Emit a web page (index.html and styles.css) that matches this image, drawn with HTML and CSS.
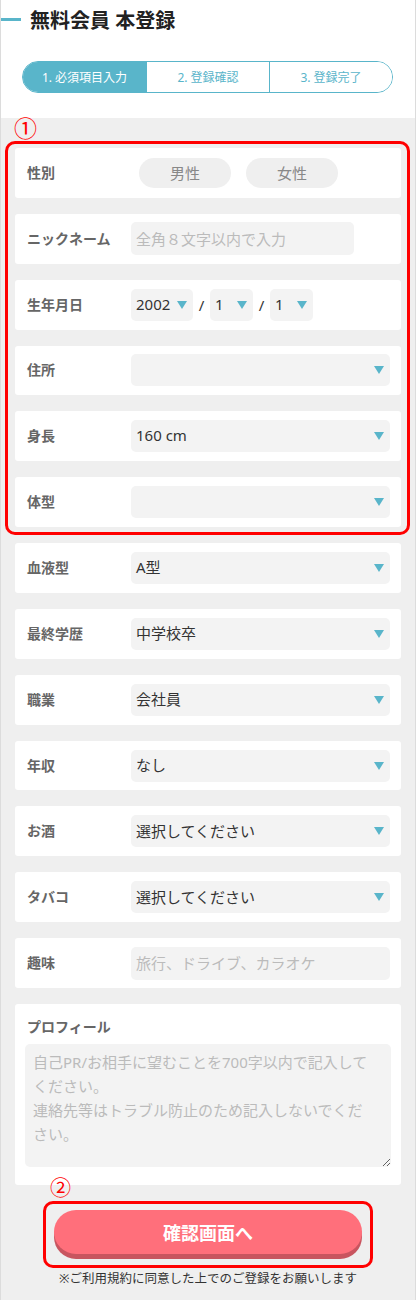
FILE: index.html
```html
<!DOCTYPE html>
<html lang="ja">
<head>
<meta charset="utf-8">
<title>無料会員 本登録</title>
<link rel="stylesheet" href="styles.css">
</head>
<body>
<div class="page">
  <header class="header">
    <div class="title-row">
      <span class="title-bar"></span>
      <h1 class="title">無料会員 本登録</h1>
    </div>
    <ol class="steps">
      <li class="step active">1. 必須項目入力</li>
      <li class="step">2. 登録確認</li>
      <li class="step">3. 登録完了</li>
    </ol>
  </header>

  <main class="form">
    <div class="hl-group">
      <span class="hl-mark">①</span>
      <div class="card">
        <span class="label">性別</span>
        <div class="gender">
          <span class="gbtn">男性</span>
          <span class="gbtn">女性</span>
        </div>
      </div>
      <div class="card">
        <span class="label">ニックネーム</span>
        <input class="text-input nick" type="text" placeholder="全角８文字以内で入力">
      </div>
      <div class="card">
        <span class="label">生年月日</span>
        <div class="date">
          <div class="select year"><span>2002</span><i class="caret"></i></div>
          <span class="slash">/</span>
          <div class="select small"><span>1</span><i class="caret"></i></div>
          <span class="slash">/</span>
          <div class="select small"><span>1</span><i class="caret"></i></div>
        </div>
      </div>
      <div class="card">
        <span class="label">住所</span>
        <div class="select"><span></span><i class="caret"></i></div>
      </div>
      <div class="card">
        <span class="label">身長</span>
        <div class="select"><span>160 cm</span><i class="caret"></i></div>
      </div>
      <div class="card">
        <span class="label">体型</span>
        <div class="select"><span></span><i class="caret"></i></div>
      </div>
    </div>

    <div class="card">
      <span class="label">血液型</span>
      <div class="select"><span>A型</span><i class="caret"></i></div>
    </div>
    <div class="card">
      <span class="label">最終学歴</span>
      <div class="select"><span>中学校卒</span><i class="caret"></i></div>
    </div>
    <div class="card">
      <span class="label">職業</span>
      <div class="select"><span>会社員</span><i class="caret"></i></div>
    </div>
    <div class="card">
      <span class="label">年収</span>
      <div class="select"><span>なし</span><i class="caret"></i></div>
    </div>
    <div class="card">
      <span class="label">お酒</span>
      <div class="select"><span>選択してください</span><i class="caret"></i></div>
    </div>
    <div class="card">
      <span class="label">タバコ</span>
      <div class="select"><span>選択してください</span><i class="caret"></i></div>
    </div>
    <div class="card">
      <span class="label">趣味</span>
      <input class="text-input wide" type="text" placeholder="旅行、ドライブ、カラオケ">
    </div>
    <div class="card profile">
      <span class="label">プロフィール</span>
      <textarea class="textarea" placeholder="自己PR/お相手に望むことを700字以内で記入してください。&#10;連絡先等はトラブル防止のため記入しないでください。"></textarea>
    </div>

    <div class="submit-wrap">
      <span class="hl-mark small">②</span>
      <button class="submit" type="button">確認画面へ</button>
    </div>
    <p class="note">※ご利用規約に同意した上でのご登録をお願いします</p>
  </main>
</div>
</body>
</html>
```

FILE: styles.css
```css
* { box-sizing: border-box; }

body {
  margin: 0;
  background: #fff;
  font-family: "Noto Sans", "Noto Sans CJK JP", sans-serif;
  color: #333;
}

.page {
  width: 416px;
  min-height: 1300px;
  border-left: 1px solid #dcdcdc;
  border-right: 1px solid #dcdcdc;
  background: #efefef;
}

/* header */
.header {
  background: #fff;
  padding: 0 0 25px;
}

.title-row {
  display: flex;
  align-items: flex-start;
  height: 42px;
}

.title-bar {
  width: 20px;
  height: 3px;
  margin-top: 18px;
  background: #59b5ca;
}

.title {
  margin: 0 0 0 9px;
  font-size: 20px;
  line-height: 42px;
  font-weight: bold;
  color: #222;
}

.steps {
  list-style: none;
  margin: 19px 22px 0 21px;
  padding: 0;
  height: 32px;
  border: 1px solid #59b5ca;
  border-radius: 16px;
  overflow: hidden;
  display: grid;
  grid-template-columns: 1fr 1fr 1fr;
}

.step {
  display: flex;
  align-items: center;
  justify-content: center;
  font-size: 12px;
  color: #59b5ca;
  background: #fff;
}

.step + .step { border-left: 1px solid #59b5ca; }

.step.active {
  background: #59b5ca;
  color: #fff;
}

/* form */
.form {
  padding: 30px 14px 0;
  display: flex;
  flex-direction: column;
  gap: 16px;
}

.hl-group {
  position: relative;
  display: flex;
  flex-direction: column;
  gap: 16px;
}

.hl-group::before,
.submit-wrap::before {
  content: "";
  position: absolute;
  border: 3px solid #ff0000;
  border-radius: 10px;
  pointer-events: none;
}

.hl-group::before { inset: -7px -9px -8px -10px; }

.hl-mark {
  position: absolute;
  left: -1px;
  top: -32px;
  font-family: "Noto Sans CJK JP", sans-serif;
  font-size: 23px;
  line-height: 23px;
  color: #ff0000;
}

.hl-mark.small {
  left: -4px;
  top: -35px;
  font-size: 21px;
  line-height: 23px;
}

.card {
  height: 49.85px;
  background: #fff;
  border-radius: 3px;
  display: flex;
  align-items: center;
  padding: 0 11px 0 12px;
}

.label {
  flex: 0 0 104px;
  font-size: 14px;
  line-height: 20px;
  font-weight: bold;
  color: #666;
}

.gender {
  display: flex;
  gap: 15px;
  margin-left: 8px;
}

.gbtn {
  width: 92px;
  height: 30px;
  border-radius: 15px;
  background: #efefef;
  color: #888;
  font-size: 15px;
  display: flex;
  align-items: center;
  justify-content: center;
}

.select {
  flex: 1;
  height: 32px;
  background: #f3f3f3;
  border-radius: 5px;
  display: flex;
  align-items: center;
  justify-content: space-between;
  padding: 0 6px 2px 5px;
  font-size: 15px;
  color: #333;
}

.caret {
  width: 0;
  height: 0;
  margin-top: 2px;
  border-left: 5px solid transparent;
  border-right: 5px solid transparent;
  border-top: 8px solid #59b5ca;
}

.date {
  display: flex;
  align-items: center;
}

.select.year { flex: 0 0 62px; }
.select.small { flex: 0 0 43px; }

.slash {
  width: 17px;
  text-align: center;
  font-size: 15px;
  color: #333;
}

.text-input {
  height: 33px;
  border: none;
  outline: none;
  background: #f3f3f3;
  border-radius: 5px;
  padding: 0 5px;
  font-family: inherit;
  font-size: 15px;
  color: #333;
}

.text-input::placeholder,
.textarea::placeholder { color: #bbb; }

.text-input.nick { width: 223px; }
.text-input.wide { flex: 1; }

.card.profile {
  height: auto;
  flex-direction: column;
  align-items: stretch;
  padding: 13px 10px 18px;
}

.card.profile .label {
  flex: none;
  padding-left: 2px;
}

.textarea {
  display: block;
  margin-top: 7px;
  width: 100%;
  height: 123px;
  border: none;
  outline: none;
  background: #f3f3f3;
  border-radius: 5px;
  padding: 6px 22px 6px 8px;
  font-family: inherit;
  font-size: 15px;
  line-height: 24px;
  color: #333;
  resize: vertical;
}

.submit-wrap {
  position: relative;
  margin: 9px auto 0;
  width: 308px;
}

.submit-wrap::before { inset: -9px -11px -14px -11px; }

.submit {
  display: block;
  width: 308px;
  height: 44px;
  border: none;
  border-radius: 22px;
  background: #ff6f7b;
  box-shadow: 0 5px 0 #c8555f;
  color: #fff;
  font-family: inherit;
  font-size: 18px;
  font-weight: bold;
}

.note {
  margin: 0;
  text-align: center;
  font-size: 12.5px;
  line-height: 18px;
  color: #333;
}
```
